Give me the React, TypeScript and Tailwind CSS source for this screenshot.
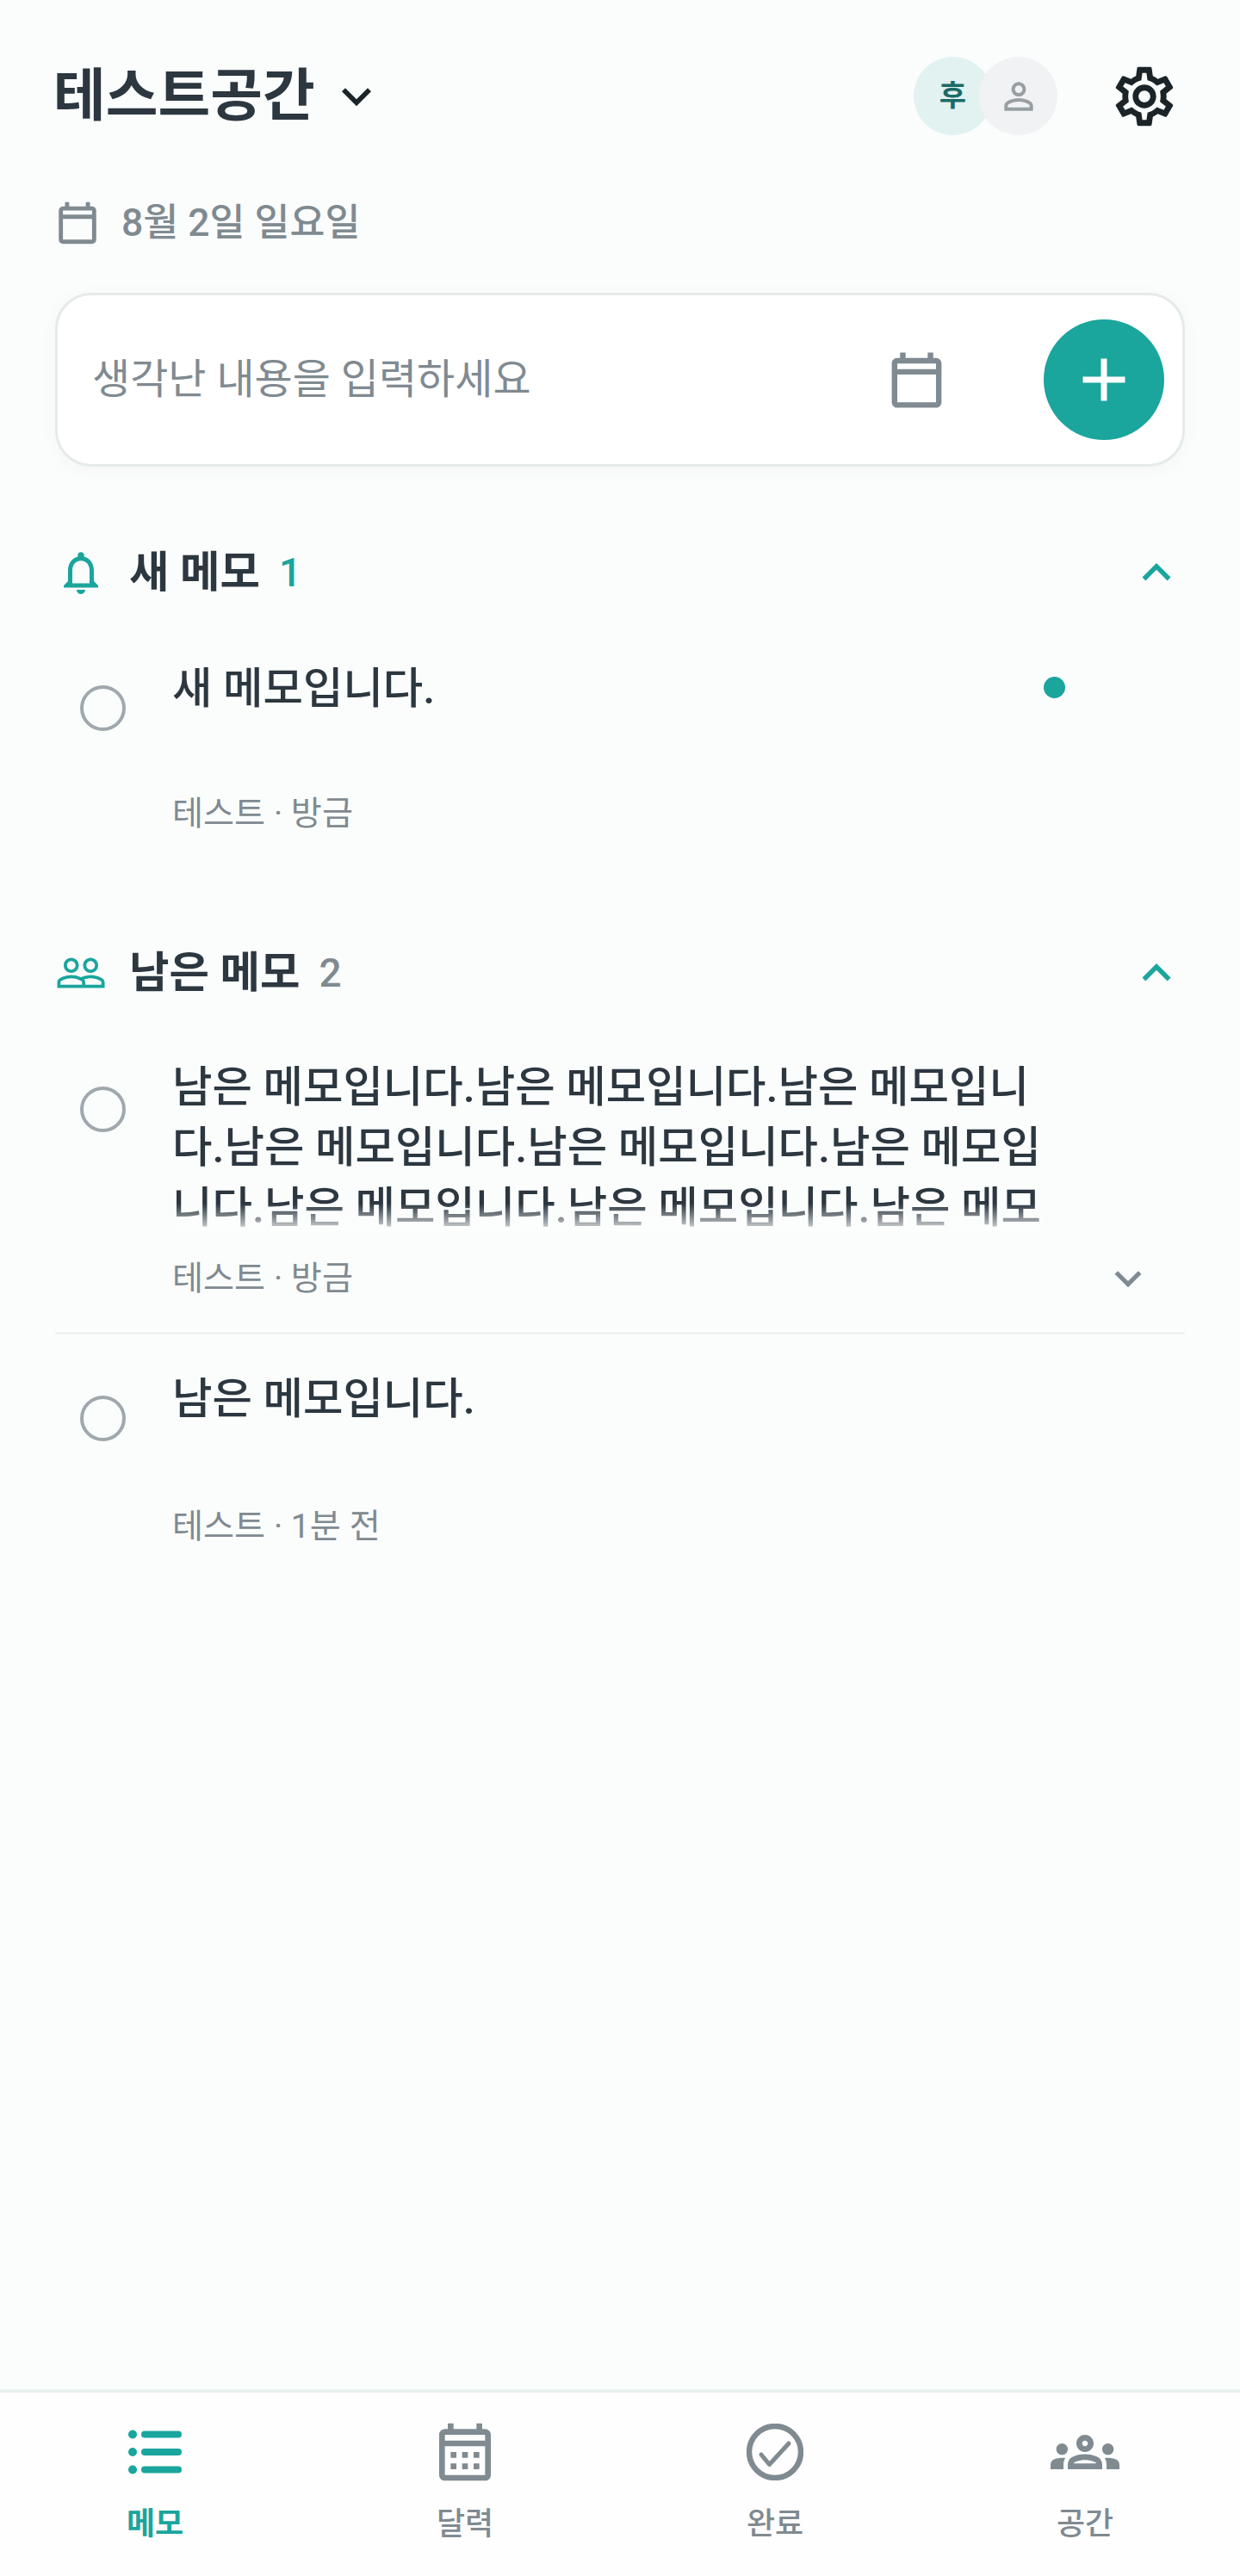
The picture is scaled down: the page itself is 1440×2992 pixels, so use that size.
import type { ReactNode } from 'react'

const FONT = 'font-[Roboto,"Noto_Sans_CJK_KR",sans-serif]'
const LONG_MEMO = '남은 메모입니다.'.repeat(8) + '남은 메모'

function Icon({ d, className }: { d: string; className: string }) {
  return (
    <svg viewBox="0 0 24 24" fill="currentColor" className={className}>
      <path d={d} />
    </svg>
  )
}

const paths = {
  expandMore: 'M16.59 8.59 12 13.17 7.41 8.59 6 10l6 6 6-6z',
  expandLess: 'M12 8l-6 6 1.41 1.41L12 10.83l4.59 4.58L18 14z',
  calendar: 'M19 4h-1V2h-2v2H8V2H6v2H5c-1.11 0-2 .9-2 2v14c0 1.1.89 2 2 2h14c1.1 0 2-.9 2-2V6c0-1.1-.9-2-2-2zm0 16H5V10h14v10zm0-12H5V6h14v2z',
  calendarMonth: 'M19 4h-1V2h-2v2H8V2H6v2H5c-1.1 0-2 .9-2 2v14c0 1.1.9 2 2 2h14c1.1 0 2-.9 2-2V6c0-1.1-.9-2-2-2zm0 16H5V10h14v10zm0-12H5V6h14v2zM9 14H7v-2h2v2zm4 0h-2v-2h2v2zm4 0h-2v-2h2v2zm-8 4H7v-2h2v2zm4 0h-2v-2h2v2zm4 0h-2v-2h2v2z',
  add: 'M19 13h-6v6h-2v-6H5v-2h6V5h2v6h6v2z',
  bell: 'M12 22c1.1 0 2-.9 2-2h-4c0 1.1.9 2 2 2zm6-6v-5c0-3.07-1.63-5.64-4.5-6.32V4c0-.83-.67-1.5-1.5-1.5s-1.5.67-1.5 1.5v.68C7.64 5.36 6 7.92 6 11v5l-2 2v1h16v-1l-2-2zm-2 1H8v-6c0-2.48 1.51-4.5 4-4.5s4 2.02 4 4.5v6z',
  people: 'M16.5 13c-1.2 0-3.07.34-4.5 1-1.43-.67-3.3-1-4.5-1C5.33 13 1 14.08 1 16.25V19h22v-2.75c0-2.17-4.33-3.25-6.5-3.25zm-4 4.5h-10v-1.25c0-.54 2.56-1.75 5-1.75s5 1.21 5 1.75v1.25zm9 0H14v-1.25c0-.46-.2-.86-.52-1.22.88-.3 1.96-.53 3.02-.53 2.44 0 5 1.21 5 1.75v1.25zM7.5 12c1.93 0 3.5-1.57 3.5-3.5S9.43 5 7.5 5 4 6.57 4 8.5 5.57 12 7.5 12zm0-5.5c1.1 0 2 .9 2 2s-.9 2-2 2-2-.9-2-2 .9-2 2-2zm9 5.5c1.93 0 3.5-1.57 3.5-3.5S18.43 5 16.5 5 13 6.57 13 8.5s1.57 3.5 3.5 3.5zm0-5.5c1.1 0 2 .9 2 2s-.9 2-2 2-2-.9-2-2 .9-2 2-2z',
  person: 'M12 5.9c1.16 0 2.1.94 2.1 2.1s-.94 2.1-2.1 2.1S9.9 9.16 9.9 8s.94-2.1 2.1-2.1m0 9c2.97 0 6.1 1.46 6.1 2.1v1.1H5.9V17c0-.64 3.13-2.1 6.1-2.1M12 4C9.79 4 8 5.79 8 8s1.79 4 4 4 4-1.79 4-4-1.79-4-4-4zm0 9c-2.67 0-8 1.34-8 4v3h16v-3c0-2.66-5.33-4-8-4z',
  settings: 'M19.43 12.98c.04-.32.07-.64.07-.98 0-.34-.03-.66-.07-.98l2.11-1.65c.19-.15.24-.42.12-.64l-2-3.46c-.09-.16-.26-.25-.44-.25-.06 0-.12.01-.17.03l-2.49 1c-.52-.4-1.08-.73-1.69-.98l-.38-2.65C14.46 2.18 14.25 2 14 2h-4c-.25 0-.46.18-.49.42l-.38 2.65c-.61.25-1.17.59-1.69.98l-2.49-1c-.06-.02-.12-.03-.18-.03-.17 0-.34.09-.43.25l-2 3.46c-.13.22-.07.49.12.64l2.11 1.65c-.04.32-.07.65-.07.98 0 .33.03.66.07.98l-2.11 1.65c-.19.15-.24.42-.12.64l2 3.46c.09.16.26.25.44.25.06 0 .12-.01.17-.03l2.49-1c.52.4 1.08.73 1.69.98l.38 2.65c.03.24.24.42.49.42h4c.25 0 .46-.18.49-.42l.38-2.65c.61-.25 1.17-.59 1.69-.98l2.49 1c.06.02.12.03.18.03.17 0 .34-.09.43-.25l2-3.46c.12-.22.07-.49-.12-.64l-2.11-1.65zm-1.98-1.71c.04.31.05.52.05.73 0 .21-.02.43-.05.73l-.14 1.13.89.7 1.08.84-.7 1.21-1.27-.51-1.04-.42-.9.68c-.43.32-.84.56-1.25.73l-1.06.43-.16 1.13-.2 1.35h-1.4l-.19-1.35-.16-1.13-1.06-.43c-.43-.18-.83-.41-1.23-.71l-.91-.7-1.06.43-1.27.51-.7-1.21 1.08-.84.89-.7-.14-1.13c-.03-.31-.05-.54-.05-.74s.02-.43.05-.73l.14-1.13-.89-.7-1.08-.84.7-1.21 1.27.51 1.04.42.9-.68c.43-.32.84-.56 1.25-.73l1.06-.43.16-1.13.2-1.35h1.39l.19 1.35.16 1.13 1.06.43c.43.18.83.41 1.23.71l.91.7 1.06-.43 1.27-.51.7 1.21-1.07.85-.89.7.14 1.13zM12 8c-2.21 0-4 1.79-4 4s1.79 4 4 4 4-1.79 4-4-1.79-4-4-4zm0 6c-1.1 0-2-.9-2-2s.9-2 2-2 2 .9 2 2-.9 2-2 2z',
  groups: 'M4 13c1.1 0 2-.9 2-2s-.9-2-2-2-2 .9-2 2 .9 2 2 2zm1.13 1.1c-.37-.06-.74-.1-1.13-.1-.99 0-1.93.21-2.78.58C.48 14.9 0 15.62 0 16.43V18h4.5v-1.61c0-.83.23-1.61.63-2.29zM20 13c1.1 0 2-.9 2-2s-.9-2-2-2-2 .9-2 2 .9 2 2 2zm4 3.43c0-.81-.48-1.53-1.22-1.85-.85-.37-1.79-.58-2.78-.58-.39 0-.76.04-1.13.1.4.68.63 1.46.63 2.29V18H24v-1.57zm-7.76-2.78c-1.17-.52-2.61-.9-4.24-.9-1.63 0-3.07.39-4.24.9C6.68 14.13 6 15.21 6 16.39V18h12v-1.61c0-1.18-.68-2.26-1.76-2.74zM8.07 16c.09-.23.13-.39.91-.69.97-.38 1.99-.56 3.02-.56s2.05.18 3.02.56c.77.3.81.46.91.69H8.07zM12 8c.55 0 1 .45 1 1s-.45 1-1 1-1-.45-1-1 .45-1 1-1m0-2c-1.66 0-3 1.34-3 3s1.34 3 3 3 3-1.34 3-3-1.34-3-3-3z',
}

function SectionHeader({ icon, title, count, countClass, className }: { icon: ReactNode; title: string; count: number; countClass: string; className: string }) {
  return (
    <div className={`flex h-[64px] items-center ${className}`}>
      <div className="flex w-[60px] justify-center">{icon}</div>
      <h2 className="ml-[26px] text-[50.5px] leading-[64px] font-bold text-[#2c3740]">{title}</h2>
      <span className={`ml-[22px] text-[46px] leading-[64px] font-medium ${countClass}`}>{count}</span>
      <Icon d={paths.expandLess} className="ml-auto h-[66px] w-[66px] text-[#1aa59d]" />
    </div>
  )
}

function Memo({ text, meta, unread, expandable, metaClass = 'mt-[37px]' }: { text: string; meta: string; unread?: boolean; expandable?: boolean; metaClass?: string }) {
  return (
    <div className="flex">
      <div className={`ml-[29px] h-[53px] w-[53px] shrink-0 rounded-full border-[4px] border-[#a0a8ad] ${expandable ? 'mt-[34px]' : 'mt-[31px]'}`} />
      <div className="ml-[54px] min-w-0 flex-1">
        <div className="flex">
          <div className="relative w-[1012px] shrink-0 overflow-hidden">
            {expandable ? (
              <p className="h-[204px] text-[50.5px] leading-[70px] font-medium break-all text-[#2c3740]">{text}</p>
            ) : (
              <p className="h-[118px] text-[50.5px] leading-[70px] font-medium text-[#2c3740]">{text}</p>
            )}
            {expandable && <div className="absolute inset-x-0 bottom-0 h-[34px] bg-gradient-to-b from-transparent to-[#fcfdfd]/90" />}
          </div>
          {unread && <div className="mt-[21px] h-[25px] w-[25px] rounded-full bg-[#1aa59d]" />}
        </div>
        <div className={`flex items-center justify-between ${metaClass}`}>
          <p className="text-[39.2px] leading-[50px] text-[#808a91]">{meta}</p>
          {expandable && <Icon d={paths.expandMore} className="mr-[35px] h-[62px] w-[62px] text-[#808a91]" />}
        </div>
      </div>
    </div>
  )
}

function Tab({ icon, label, active }: { icon: ReactNode; label: string; active?: boolean }) {
  return (
    <div className="flex flex-1 flex-col items-center">
      <div className="flex h-[80px] items-center justify-center">{icon}</div>
      <span className={`mt-[19px] text-[36px] leading-[50px] ${active ? 'font-bold text-[#1aa59d]' : 'font-medium text-[#808a91]'}`}>{label}</span>
    </div>
  )
}

export default function App() {
  return (
    <div className={`${FONT} flex h-[2992px] w-full flex-col bg-[#fbfdfd]`}>
      <header className="mt-[66px] flex h-[91px] items-center pr-[70px] pl-[62px]">
        <h1 className="text-[66px] leading-[91px] font-bold text-[#2c3740]">테스트공간</h1>
        <Icon d={paths.expandMore} className="ml-[14px] h-[68px] w-[68px] text-[#1b2428]" />
        <div className="ml-auto flex">
          <div className="flex h-[91px] w-[91px] items-center justify-center rounded-full bg-[#e2f2f0] text-[34px] font-semibold text-[#1a6b66]">후</div>
          <div className="-ml-[15px] flex h-[91px] w-[91px] items-center justify-center rounded-full bg-[#f1f2f4]">
            <Icon d={paths.person} className="h-[50px] w-[50px] text-[#989fa3]" />
          </div>
        </div>
        <Icon d={paths.settings} className="ml-[60px] h-[82px] w-[82px] text-[#1b2428]" />
      </header>

      <div className="mt-[73px] flex h-[58px] items-center pl-[61px]">
        <Icon d={paths.calendar} className="h-[58px] w-[58px] text-[#808a91]" />
        <span className="ml-[22px] text-[44.5px] leading-[58px] font-medium text-[#808a91]">8월 2일 일요일</span>
      </div>

      <div className="mx-[64px] mt-[52px] flex h-[202px] items-center rounded-[42px] border-[3px] border-[#e5eaea] bg-white pr-[21px] pl-[40px] shadow-[0_4px_24px_rgba(0,0,0,0.03)]">
        <span className="text-[48px] text-[#808a91]">생각난 내용을 입력하세요</span>
        <Icon d={paths.calendar} className="mr-[109px] ml-auto h-[77px] w-[77px] text-[#808a91]" />
        <div className="flex h-[140px] w-[140px] items-center justify-center rounded-full bg-[#1aa59d]">
          <Icon d={paths.add} className="h-[84px] w-[84px] text-white" />
        </div>
      </div>

      <main className="px-[64px]">
        <SectionHeader
          className="mt-[91px]"
          icon={<Icon d={paths.bell} className="h-[64px] w-[64px] text-[#1aa59d]" />}
          title="새 메모"
          count={1}
          countClass="text-[#1aa59d]"
        />
        <div className="mt-[68px]">
          <Memo text="새 메모입니다." meta="테스트 · 방금" unread />
        </div>

        <SectionHeader
          className="mt-[128px]"
          icon={<Icon d={paths.people} className="h-[64px] w-[64px] text-[#1aa59d]" />}
          title="남은 메모"
          count={2}
          countClass="text-[#808a91]"
        />
        <div className="mt-[66px] border-b-[3px] border-[#eff1f3] pb-[31px]">
          <Memo text={LONG_MEMO} meta="테스트 · 방금" expandable metaClass="mt-[22px]" />
        </div>
        <div className="mt-[40px]">
          <Memo text="남은 메모입니다." meta="테스트 · 1분 전" metaClass="mt-[40px]" />
        </div>
      </main>

      <nav className="mt-auto flex h-[217px] border-t-[4px] border-[#ebf0f0] bg-[#fefefe] pt-[29px]">
        <Tab
          active
          label="메모"
          icon={
            <svg viewBox="0 0 62 52" fill="currentColor" className="h-[52px] w-[62px] text-[#1aa59d]">
              <circle cx="5" cy="5.5" r="5" />
              <circle cx="5" cy="26" r="5" />
              <circle cx="5" cy="46.5" r="5" />
              <rect x="15" y="1.5" width="47" height="8" rx="4" />
              <rect x="15" y="22" width="47" height="8" rx="4" />
              <rect x="15" y="42.5" width="47" height="8" rx="4" />
            </svg>
          }
        />
        <Tab label="달력" icon={<Icon d={paths.calendarMonth} className="h-[80px] w-[80px] text-[#808a91]" />} />
        <Tab
          label="완료"
          icon={
            <svg viewBox="0 0 66 66" fill="none" stroke="currentColor" className="h-[66px] w-[66px] text-[#808a91]">
              <circle cx="33" cy="33" r="30" strokeWidth="6.5" />
              <path d="M17 36l9.5 11.5L49 23" strokeWidth="5" strokeLinecap="round" strokeLinejoin="round" />
            </svg>
          }
        />
        <Tab label="공간" icon={<Icon d={paths.groups} className="h-[80px] w-[80px] text-[#808a91]" />} />
      </nav>
    </div>
  )
}
